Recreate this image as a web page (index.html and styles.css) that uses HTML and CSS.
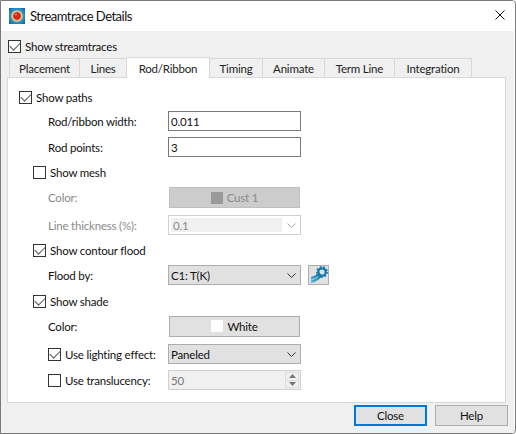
FILE: index.html
```html
<!DOCTYPE html>
<html lang="en">
<head>
<meta charset="utf-8">
<title>Streamtrace Details</title>
<link rel="stylesheet" href="styles.css">
</head>
<body>
<div class="window">
  <header class="titlebar">
    <svg class="app-icon" viewBox="0 0 16 16" width="16" height="16">
      <defs>
        <radialGradient id="bg" cx="50%" cy="50%" r="70%">
          <stop offset="0" stop-color="#9fd4e8"/>
          <stop offset="0.6" stop-color="#2f8fc4"/>
          <stop offset="1" stop-color="#0f5f9c"/>
        </radialGradient>
        <radialGradient id="ball" cx="50%" cy="50%" r="50%">
          <stop offset="0" stop-color="#d8261e"/>
          <stop offset="0.6" stop-color="#d8261e"/>
          <stop offset="0.75" stop-color="#f0a040"/>
          <stop offset="1" stop-color="#f6ecc0"/>
        </radialGradient>
      </defs>
      <rect width="16" height="16" fill="url(#bg)"/>
      <circle cx="8" cy="8" r="5.500" fill="url(#ball)"/>
      <circle cx="7" cy="6.600" r="0.900" fill="#f6a39a"/>
    </svg>
    <span class="title">Streamtrace Details</span>
    <svg class="close-x" viewBox="0 0 10 10" width="10" height="10">
      <path d="M.5.5l9 9M9.500.5l-9 9" stroke="#111" stroke-width="1" fill="none"/>
    </svg>
  </header>
  <main class="content">
    <label class="check top-check"><span class="box on"></span>Show streamtraces</label>
    <nav class="tabs">
      <span class="tab t1">Placement</span>
      <span class="tab t2">Lines</span>
      <span class="tab t3 active">Rod/Ribbon</span>
      <span class="tab t4">Timing</span>
      <span class="tab t5">Animate</span>
      <span class="tab t6">Term Line</span>
      <span class="tab t7">Integration</span>
    </nav>
    <section class="pane">
      <label class="row check"><span class="box on"></span>Show paths</label>
      <div class="row form m-1"><span class="lbl">Rod/ribbon width:</span><span class="input">0.011</span></div>
      <div class="row form m1"><span class="lbl">Rod points:</span><span class="input">3</span></div>
      <label class="row check lv1"><span class="box"></span>Show mesh</label>
      <div class="row form tall"><span class="lbl off">Color:</span>
        <span class="btn disabled"><i class="swatch grey"></i>Cust 1</span></div>
      <div class="row form m2"><span class="lbl off">Line thickness (%):</span>
        <span class="select disabled"><span class="sel-text">0.1</span>
          <svg class="chev" viewBox="0 0 9 5" width="9" height="5"><path d="M.5.500l4 4 4-4" stroke="#aaa" fill="none"/></svg></span></div>
      <label class="row check lv1"><span class="box on"></span>Show contour flood</label>
      <div class="row form"><span class="lbl">Flood by:</span>
        <span class="select">C1: T(K)
          <svg class="chev" viewBox="0 0 9 5" width="9" height="5"><path d="M.5.500l4 4 4-4" stroke="#333" fill="none"/></svg></span>
        <span class="icon-btn">
          <svg viewBox="0 0 18 18" width="18" height="18">
            <defs><linearGradient id="st" x1="0" y1="1" x2="1" y2="0">
              <stop offset="0" stop-color="#5ab8e0"/><stop offset="1" stop-color="#0b5f95"/></linearGradient></defs>
            <path d="M1 11C5 10 7 8 9 6l3 4c-2 3-6 6-11 7z" fill="url(#st)"/>
            <path d="M1 14c4-1 7-3 9-5" stroke="#9fdcf2" fill="none"/>
            <circle cx="12" cy="6" r="3.700" fill="none" stroke="#1479a8" stroke-width="2.200"/>
            <circle cx="12" cy="6" r="5.200" fill="none" stroke="#1479a8" stroke-width="1.500" stroke-dasharray="1.800 1.800"/>
          </svg>
        </span></div>
      <label class="row check lv1 m1"><span class="box on"></span>Show shade</label>
      <div class="row form"><span class="lbl">Color:</span>
        <span class="btn"><i class="swatch white"></i>White</span></div>
      <div class="row form m3"><label class="check lv2"><span class="box on"></span>Use lighting effect:</label>
        <span class="select">Paneled
          <svg class="chev" viewBox="0 0 9 5" width="9" height="5"><path d="M.5.500l4 4 4-4" stroke="#333" fill="none"/></svg></span></div>
      <div class="row form m1"><label class="check lv2"><span class="box"></span>Use translucency:</label>
        <span class="spin"><span>50</span>
          <span class="spin-btns">
            <span class="arrow"><svg viewBox="0 0 7 4" width="7" height="4"><path d="M3.500 0L7 4H0z" fill="#777"/></svg></span>
            <span class="arrow"><svg viewBox="0 0 7 4" width="7" height="4"><path d="M3.500 4L7 0H0z" fill="#777"/></svg></span>
          </span></span></div>
    </section>
    <footer class="actions">
      <span class="action default">Close</span>
      <span class="action">Help</span>
    </footer>
  </main>
</div>
</body>
</html>
```
FILE: styles.css
```css
* { box-sizing: border-box; }
html, body { margin: 0; padding: 0; background: #fff; }
body {
  width: 516px;
  height: 434px;
  overflow: hidden;
  font-family: Lato, "Noto Sans", sans-serif;
  font-size: 11.5px;
  letter-spacing: -0.2px;
  color: #111;
}
.window {
  width: 516px;
  height: 434px;
  border: 1px solid #7a7a7a;
  border-radius: 0 4px 4px 0;
  padding-right: 1px;
  background: #fff;
  display: flex;
  flex-direction: column;
}
.titlebar {
  height: 30px;
  flex: none;
  background: #fff;
  display: flex;
  align-items: center;
  padding-left: 8px;
}
.app-icon { margin-right: 5px; }
.title { font-size: 13px; letter-spacing: -0.5px; }
.close-x { margin-left: auto; margin-right: 9px; margin-bottom: 2px; }
.content {
  flex: 1;
  background: #f0f0f0;
  padding: 0 0 0 6px;
  display: flex;
  flex-direction: column;
}
.check { display: flex; align-items: center; gap: 4px; }
.top-check { height: 20px; padding-left: 1px; margin-top: 5px; }
.box {
  width: 13px;
  height: 13px;
  flex: none;
  background: #fff;
  border: 1px solid #333;
  position: relative;
}
.box.on::after {
  content: "";
  position: absolute;
  left: 1px;
  top: 1px;
  width: 9px;
  height: 5px;
  border: solid #555;
  border-width: 0 0 1px 1px;
  transform: rotate(-45deg);
}
.tabs { display: flex; height: 21px; padding-left: 2px; align-items: flex-end; position: relative; z-index: 1; }
.tab {
  height: 19px;
  background: #f0f0f0;
  border: 1px solid #d9d9d9;
  border-bottom: 0;
  border-left: 0;
  display: flex;
  align-items: center;
  justify-content: center;
  color: #222;
}
.t1 { width: 71px; border-left: 1px solid #d9d9d9; }
.t2 { width: 47px; }
.t3 { width: 83px; }
.t4 { width: 53px; }
.t5 { width: 62px; }
.t6 { width: 70px; }
.t7 { width: 77px; }
.tab.active {
  height: 21px;
  background: #fff;
  margin-bottom: -1px;
}
.pane {
  width: 499px;
  height: 326px;
  flex: none;
  background: #fff;
  border: 1px solid #d9d9d9;
  padding: 9px 0 0 11px;
  display: flex;
  flex-direction: column;
  gap: 5px;
}
.row { height: 20px; flex: none; }
.lv1 { margin-left: 14px; }
.form { display: flex; align-items: center; padding-left: 29px; }
.lv2 { width: 120px; flex: none; }
.m-1 { margin-top: -1px; }
.m1 { margin-top: 1px; }
.m2 { margin-top: 2px; }
.m3 { margin-top: 3px; }
.tall { height: 21px; }
.lbl { width: 120px; flex: none; }
.off { color: #8a8a8a; }
.input {
  width: 133px;
  height: 20px;
  background: #fff;
  border: 1px solid #7a7a7a;
  display: flex;
  align-items: center;
  padding-left: 2px;
}
.btn {
  width: 131px;
  height: 21px;
  margin-left: 1px;
  background: #e1e1e1;
  border: 1px solid #adadad;
  display: flex;
  align-items: center;
  justify-content: center;
  gap: 4px;
}
.btn.disabled { background: #cccccc; border-color: #bfbfbf; color: #8a8a8a; }
.swatch { width: 12px; height: 12px; display: block; }
.swatch.grey { background: #9a9a9a; }
.swatch.white { background: #fff; }
.select {
  width: 133px;
  height: 20px;
  background: #e1e1e1;
  border: 1px solid #adadad;
  display: flex;
  align-items: center;
  padding-left: 2px;
}
.chev { margin-left: auto; margin-right: 4px; }
.select.disabled { background: #fff; border: 1px solid #cfcfcf; color: #8a8a8a; padding: 0; }
.sel-text { background: #f0f0f0; width: 111px; height: 14px; margin-left: 2px; padding-left: 2px; display: flex; align-items: center; }
.icon-btn {
  width: 21px;
  height: 20px;
  margin-left: 7px;
  background: #e1e1e1;
  border: 1px solid #adadad;
  display: flex;
  align-items: center;
  justify-content: center;
}
.spin {
  width: 133px;
  height: 20px;
  background: #f0f0f0;
  border: 1px solid #d0d0d0;
  color: #777;
  display: flex;
  align-items: center;
  padding-left: 2px;
}
.spin-btns { margin-left: auto; margin-right: 1px; width: 14px; height: 16px; display: flex; flex-direction: column; }
.arrow {
  flex: 1;
  border: 1px solid #dcdcdc;
  display: flex;
  align-items: center;
  justify-content: center;
}
.arrow + .arrow { border-top: 0; }
.actions { display: flex; gap: 8px; padding: 2px 0 0 347px; }
.action {
  width: 73px;
  height: 21px;
  background: #e1e1e1;
  border: 1px solid #adadad;
  display: flex;
  align-items: center;
  justify-content: center;
}
.action.default { border: 2px solid #0078d7; }
```
